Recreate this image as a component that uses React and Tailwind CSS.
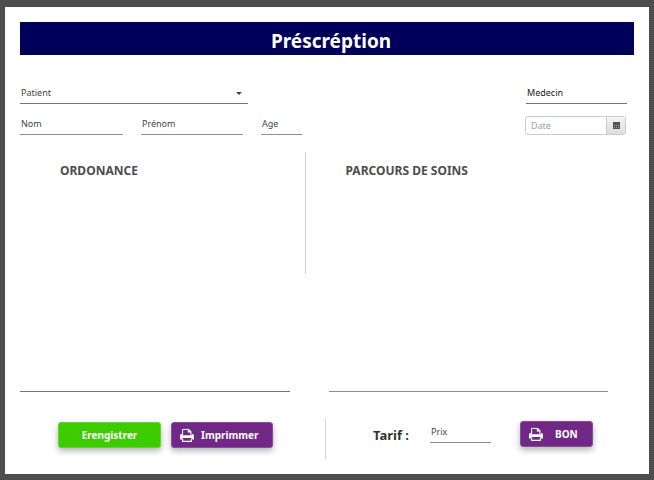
import React from "react";

const fieldLine =
  "peer col-start-1 row-start-1 block h-[21px] w-full min-w-0 rounded-none border-b bg-transparent px-px text-[9px] leading-4 outline-none";

const fieldLabel =
  "pointer-events-none col-start-1 row-start-1 self-start px-px pt-0.5 text-[9px] leading-4 peer-focus:opacity-0";

function Field({ id, label, className = "", line = "border-[#8d8d8d]", ink = "text-[#444]" }) {
  return (
    <div className={`grid ${className}`}>
      <input id={id} type="text" className={`${fieldLine} ${line}`} />
      <label htmlFor={id} className={`${fieldLabel} ${ink}`}>{label}</label>
    </div>
  );
}

function Printer() {
  return (
    <svg viewBox="0 0 14 14" className="h-3.5 w-3.5 shrink-0" aria-hidden="true">
      <path d="M2.6 7V1.4h5.9l2.4 2.4V7" fill="none" stroke="#fff" strokeWidth="1" />
      <path d="M7.8 1h1.1l2.5 2.4v1.1H7.8z" fill="#fff" />
      <path d="M1 6h1.1v1.2h9.8V6H13l1 1.2v4.3h-2v-1.4H2v1.4H0V7.2z" fill="#fff" />
      <path d="M2.6 10.5v2.9h8.8v-2.9" fill="none" stroke="#fff" strokeWidth="1.2" />
    </svg>
  );
}

function Calendar() {
  return (
    <svg viewBox="0 0 7 7" className="h-[7px] w-[7px]" aria-hidden="true">
      <path d="M0 0h7v7H0z" fill="#555" />
      <path d="M1 3h1v1H1zM3 3h1v1H3zM5 3h1v1H5zM1 5h1v1H1zM3 5h1v1H3zM5 5h1v1H5z" fill="#999" />
    </svg>
  );
}

const buttonBase =
  "flex h-[26px] items-center rounded-[3px] border text-[10px] leading-4 font-bold text-white shadow-[0_3px_6px_rgba(0,0,0,0.3)]";

export default function App() {
  return (
    <div className="min-h-screen bg-[repeating-conic-gradient(#484848_0_25%,#525252_0_50%)] bg-[length:2px_2px] px-[5px] pt-[7px] pb-1.5 font-['Noto_Sans','Open_Sans',sans-serif]">
      <form className="bg-white px-[15px] pt-[15px] pb-[15px]" onSubmit={(e) => e.preventDefault()}>
        <h1 className="flex h-[33px] items-center justify-center bg-[#00005a] pt-1 pl-2 text-[19px] leading-7 font-bold text-white">
          Préscréption
        </h1>

        <div className="mt-7 flex justify-between pr-[7px]">
          <div className="relative grid w-[228px]">
            <select id="patient" className={`${fieldLine} appearance-none border-[#757575]`}>
              <option value=""></option>
            </select>
            <label htmlFor="patient" className={`${fieldLabel} text-[#444]`}>Patient</label>
            <svg viewBox="0 0 6 3" className="pointer-events-none absolute top-[9px] right-1.5 h-[3px] w-1.5" aria-hidden="true">
              <path d="M0 0h6L3 3z" fill="#444" />
            </svg>
          </div>
          <Field id="medecin" label="Medecin" className="w-[101px]" line="border-[#757575]" ink="text-[#222]" />
        </div>

        <div className="mt-2.5 flex items-start justify-between pr-2">
          <div className="flex gap-[18px]">
            <Field id="nom" label="Nom" className="w-[103px]" />
            <Field id="prenom" label="Prénom" className="w-[102px]" />
            <Field id="age" label="Age" className="w-[41px]" />
          </div>
          <div className="mt-0.5 flex h-[19px] w-[101px] overflow-hidden rounded-[3px] border border-[#ccc]">
            <div className="grid min-w-0 flex-1">
              <input id="date" type="text" className="peer col-start-1 row-start-1 w-full min-w-0 bg-transparent pl-[5px] text-[9px] leading-4 outline-none" />
              <label htmlFor="date" className="pointer-events-none col-start-1 row-start-1 self-center pl-[5px] text-[9px] leading-4 text-[#9aa0a6] peer-focus:opacity-0">
                Date
              </label>
            </div>
            <button type="button" aria-label="Choisir une date" className="flex w-[19px] items-center justify-center border-l border-[#ccc] bg-linear-to-b from-[#f5f5f5] to-[#dcdcdc]">
              <Calendar />
            </button>
          </div>
        </div>

        <div className="mt-[17px] flex">
          <section className="flex h-60 flex-[270] flex-col">
            <h2 className="mt-2.5 ml-10 text-[12px] leading-[18px] font-bold text-[#4d4d4d]">
              <label htmlFor="ordonance">ORDONANCE</label>
            </h2>
            <textarea id="ordonance" className="w-full flex-1 resize-none border-b border-[#757575] outline-none" />
          </section>
          <div className="mr-[23px] ml-[15px] h-[122px] w-px bg-[#d4d4d4]" />
          <section className="mr-[26px] flex h-60 flex-[280] flex-col">
            <h2 className="mt-2.5 ml-[17px] text-[12px] leading-[18px] font-bold text-[#4d4d4d]">
              <label htmlFor="parcours">PARCOURS DE SOINS</label>
            </h2>
            <textarea id="parcours" className="w-full flex-1 resize-none border-b border-[#8d8d8d] outline-none" />
          </section>
        </div>

        <div className="mt-[27px] flex h-10 items-start">
          <div className="ml-[38px] flex gap-2.5 pt-[3px]">
            <button type="submit" className={`${buttonBase} w-[103px] justify-center border-[#65d236] bg-[#3dcc00]`}>
              Erengistrer
            </button>
            <button type="button" className={`${buttonBase} w-[102px] gap-[7px] border-[#8a4d9c] bg-[#702785] pl-2`}>
              <Printer />
              Imprimmer
            </button>
          </div>
          <div className="ml-[52px] h-10 w-px bg-[#d4d4d4]" />
          <p className="ml-[47px] w-[57px] pt-[7px] text-[13px] leading-[18px] font-bold text-[#333]">
            Tarif :
          </p>
          <Field id="prix" label="Prix" className="w-[61px] pt-[3px]" />
          <button type="button" className={`${buttonBase} mt-0.5 ml-[29px] w-[73px] gap-3 border-[#8a4d9c] bg-[#702785] pl-2`}>
            <Printer />
            BON
          </button>
        </div>
      </form>
    </div>
  );
}
